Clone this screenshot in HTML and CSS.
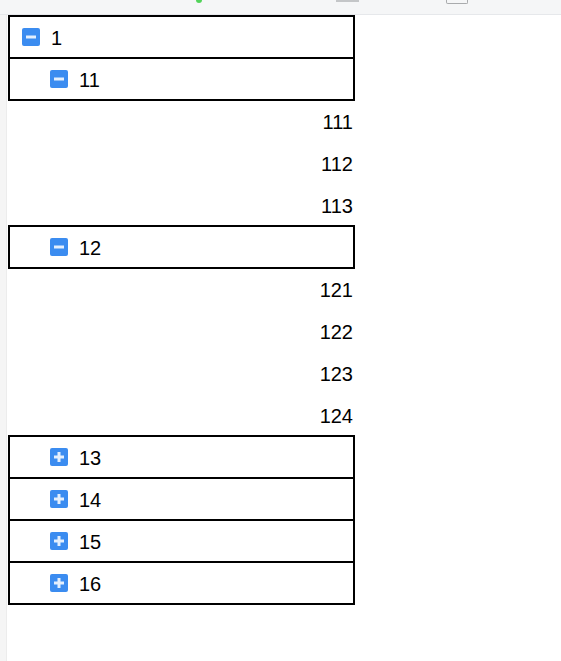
FILE: index.html
```html
<!DOCTYPE html>
<html lang="en">
<head>
    <meta charset="UTF-8">
    <meta name="viewport" content="width=device-width, initial-scale=1.0">
    <title>Tree</title>
    <link rel="stylesheet" href="styles.css">
</head>
<body>
    <div class="toolbar">
        <span class="tool-dot"></span>
        <span class="tool-bar"></span>
        <span class="tool-doc"></span>
    </div>

    <div class="shell">
        <div class="side"></div>
        <main class="content">
            <div class="tree">
                <!-- level 1 -->
                <div class="node box lv1">
                    <svg class="toggle" width="18" height="18" viewBox="0 0 18 18"><rect width="18" height="18" rx="2" fill="#3b8cf0"/><rect x="4" y="7.5" width="10" height="3" fill="#e4effd"/></svg>
                    <span class="label">1</span>
                </div>

                <div class="node box lv2">
                    <svg class="toggle" width="18" height="18" viewBox="0 0 18 18"><rect width="18" height="18" rx="2" fill="#3b8cf0"/><rect x="4" y="7.5" width="10" height="3" fill="#e4effd"/></svg>
                    <span class="label">11</span>
                </div>
                <div class="node leaf"><span class="label">111</span></div>
                <div class="node leaf"><span class="label">112</span></div>
                <div class="node leaf"><span class="label">113</span></div>

                <div class="node box lv2">
                    <svg class="toggle" width="18" height="18" viewBox="0 0 18 18"><rect width="18" height="18" rx="2" fill="#3b8cf0"/><rect x="4" y="7.5" width="10" height="3" fill="#e4effd"/></svg>
                    <span class="label">12</span>
                </div>
                <div class="node leaf"><span class="label">121</span></div>
                <div class="node leaf"><span class="label">122</span></div>
                <div class="node leaf"><span class="label">123</span></div>
                <div class="node leaf"><span class="label">124</span></div>

                <div class="node box lv2">
                    <svg class="toggle" width="18" height="18" viewBox="0 0 18 18"><rect width="18" height="18" rx="2" fill="#3b8cf0"/><rect x="4" y="7.5" width="10" height="3" fill="#e4effd"/><rect x="7.5" y="4" width="3" height="10" fill="#e4effd"/></svg>
                    <span class="label">13</span>
                </div>
                <div class="node box lv2">
                    <svg class="toggle" width="18" height="18" viewBox="0 0 18 18"><rect width="18" height="18" rx="2" fill="#3b8cf0"/><rect x="4" y="7.5" width="10" height="3" fill="#e4effd"/><rect x="7.5" y="4" width="3" height="10" fill="#e4effd"/></svg>
                    <span class="label">14</span>
                </div>
                <div class="node box lv2">
                    <svg class="toggle" width="18" height="18" viewBox="0 0 18 18"><rect width="18" height="18" rx="2" fill="#3b8cf0"/><rect x="4" y="7.5" width="10" height="3" fill="#e4effd"/><rect x="7.5" y="4" width="3" height="10" fill="#e4effd"/></svg>
                    <span class="label">15</span>
                </div>
                <div class="node box lv2">
                    <svg class="toggle" width="18" height="18" viewBox="0 0 18 18"><rect width="18" height="18" rx="2" fill="#3b8cf0"/><rect x="4" y="7.5" width="10" height="3" fill="#e4effd"/><rect x="7.5" y="4" width="3" height="10" fill="#e4effd"/></svg>
                    <span class="label">16</span>
                </div>
            </div>
        </main>
    </div>
</body>
</html>
```

FILE: styles.css
```css
* {
    margin: 0;
    padding: 0;
    box-sizing: border-box;
}

body {
    font-family: 'Liberation Sans', Arial, sans-serif;
    background-color: #ffffff;
    color: #000;
    min-height: 100vh;
    display: flex;
    flex-direction: column;
}

/* cut-off toolbar at the top */
.toolbar {
    height: 15px;
    background-color: #f5f6f7;
    border-bottom: 1px solid #e6e8eb;
    display: flex;
    align-items: flex-start;
    flex-shrink: 0;
}

.tool-dot {
    width: 6px;
    height: 3px;
    margin-left: 196px;
    background-color: #52d35a;
    border-radius: 0 0 3px 3px;
}

.tool-bar {
    width: 23px;
    height: 2px;
    margin-left: 134px;
    background-color: #c4c6c8;
}

.tool-doc {
    width: 22px;
    height: 4px;
    margin-left: 87px;
    border: 1px solid #a9abad;
    border-top: none;
    border-radius: 0 0 2px 2px;
}

.shell {
    display: flex;
    flex: 1;
}

.side {
    width: 7px;
    background-color: #f5f5f5;
    border-right: 1px solid #ececec;
    flex-shrink: 0;
}

.content {
    padding-left: 1px;
}

.tree {
    width: 347px;
    display: flex;
    flex-direction: column;
}

.node {
    height: 44px;
    border: 2px solid transparent;
    margin-bottom: -2px;
    display: flex;
    align-items: center;
    font-size: 20px;
    line-height: 1;
}

.node.box {
    border-color: #000;
}

.lv1 {
    padding-left: 12px;
}

.lv2 {
    padding-left: 40px;
}

.leaf {
    justify-content: flex-end;
}

.toggle {
    flex-shrink: 0;
    margin-right: 11px;
}

.label {
    padding-top: 2px;
}
```
